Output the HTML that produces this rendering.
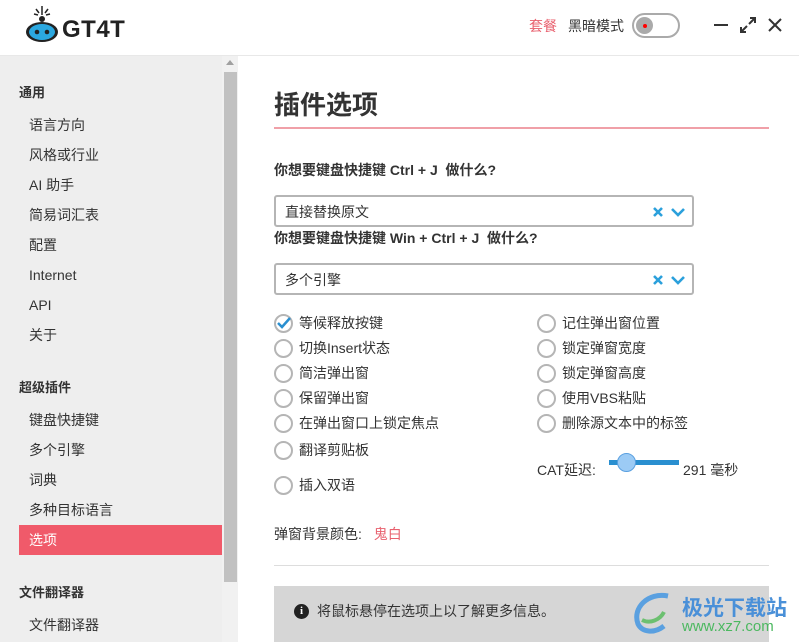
<!DOCTYPE html>
<html><head><meta charset="utf-8"><style>
*{margin:0;padding:0;box-sizing:border-box}
body{width:799px;height:642px;overflow:hidden;background:#fff;font-family:"Liberation Sans","Noto Sans CJK SC",sans-serif;color:#333;position:relative;font-size:14px}
.a{position:absolute;white-space:nowrap}
.side{position:absolute;left:0;top:56px;width:222px;height:586px;background:#eee}
.sb{position:absolute;left:222px;top:56px;width:16px;height:586px;background:#f1f1f1}
.thumb{position:absolute;left:224px;top:72px;width:13px;height:510px;background:#c1c1c1}
.h{font-weight:bold;color:#333;font-size:13px;line-height:18px}
.it{font-size:14px;color:#333;line-height:18px}
.sel{position:absolute;left:274px;width:420px;height:32px;border:2px solid #b5b5b5;border-radius:3px}
.sel span{position:absolute;left:9px;top:6px;font-size:14px;line-height:18px}
.rad{position:absolute;width:19px;height:19px;border:2px solid #b5b5b5;border-radius:50%;background:#fff}
.lbl{position:absolute;font-size:14px;color:#333;white-space:nowrap;line-height:18px}
</style></head><body>
<div class="a" style="left:0;top:55px;width:799px;height:1px;background:#e8e8e8"></div>
<svg class="a" style="left:24px;top:3px" width="36" height="40" viewBox="0 0 36 40">
<g stroke="#222" stroke-width="1.5"><line x1="18" y1="3" x2="18" y2="12"/><line x1="12" y1="6" x2="15" y2="10"/><line x1="24" y1="6" x2="21" y2="10"/><line x1="10" y1="11" x2="14" y2="12"/><line x1="26" y1="11" x2="22" y2="12"/></g>
<circle cx="18" cy="16" r="3" fill="#222"/>
<ellipse cx="18" cy="29" rx="16" ry="10" fill="#222"/><ellipse cx="18" cy="29" rx="13" ry="8" fill="#2ba8e0"/>
<circle cx="13" cy="29" r="2.3" fill="#222"/><circle cx="23" cy="29" r="2.3" fill="#222"/></svg>
<div class="a" style="left:62px;top:16px;font-size:24px;font-weight:bold;color:#222;letter-spacing:0.5px">GT4T</div>
<div class="a" style="left:529px;top:16px;font-size:14px;color:#e8606e">套餐</div>
<div class="a" style="left:568px;top:16px;font-size:14px;color:#333">黑暗模式</div>
<div class="a" style="left:632px;top:13px;width:48px;height:25px;border:2px solid #aaa;border-radius:13px"></div>
<div class="a" style="left:636px;top:17px;width:17px;height:17px;border-radius:50%;background:#aaa"></div>
<div class="a" style="left:643px;top:24px;width:4px;height:4px;border-radius:50%;background:red"></div>
<div class="a" style="left:714px;top:24px;width:14px;height:2px;background:#333"></div>
<svg class="a" style="left:739px;top:16px" width="18" height="18" viewBox="0 0 18 18" stroke="#333" stroke-width="2" fill="none"><path d="M10 8L16 2M11 2h5v5M8 10L2 16M2 11v5h5"/></svg>
<svg class="a" style="left:768px;top:18px" width="14" height="14" viewBox="0 0 14 14" stroke="#333" stroke-width="2"><path d="M1 1L13 13M13 1L1 13"/></svg>

<div class="side"></div><div class="sb"></div><div class="thumb"></div>
<div class="a" style="left:226px;top:60px;width:0;height:0;border-left:4px solid transparent;border-right:4px solid transparent;border-bottom:5px solid #a0a0a0"></div>
<div class="a" style="left:19px;top:525px;width:203px;height:30px;background:#f05a6a"></div>
<div class="a h" style="left:19px;top:84px">通用</div>
<div class="a it" style="left:29px;top:116px">语言方向</div>
<div class="a it" style="left:29px;top:146px">风格或行业</div>
<div class="a it" style="left:29px;top:176px">AI 助手</div>
<div class="a it" style="left:29px;top:206px">简易词汇表</div>
<div class="a it" style="left:29px;top:236px">配置</div>
<div class="a it" style="left:29px;top:266px">Internet</div>
<div class="a it" style="left:29px;top:296px">API</div>
<div class="a it" style="left:29px;top:326px">关于</div>
<div class="a h" style="left:19px;top:379px">超级插件</div>
<div class="a it" style="left:29px;top:411px">键盘快捷键</div>
<div class="a it" style="left:29px;top:441px">多个引擎</div>
<div class="a it" style="left:29px;top:471px">词典</div>
<div class="a it" style="left:29px;top:501px">多种目标语言</div>
<div class="a it" style="left:29px;top:531px;color:#fff">选项</div>
<div class="a h" style="left:19px;top:584px">文件翻译器</div>
<div class="a it" style="left:29px;top:616px">文件翻译器</div>

<div class="a" style="left:274px;top:85px;font-size:26px;font-weight:bold;color:#333">插件选项</div>
<div class="a" style="left:274px;top:127px;width:495px;height:2px;background:#f0a0a8"></div>
<div class="a lbl" style="left:274px;top:161px;font-weight:bold">你想要键盘快捷键 Ctrl + J&nbsp; 做什么?</div>
<div class="sel" style="top:195px"><span>直接替换原文</span></div>
<div class="a lbl" style="left:274px;top:229px;font-weight:bold">你想要键盘快捷键 Win + Ctrl + J&nbsp; 做什么?</div>
<div class="sel" style="top:263px"><span>多个引擎</span></div>
<svg class="a" style="left:652px;top:205px" width="38" height="14" viewBox="0 0 38 14" stroke="#2ba0dc" stroke-width="2.6" fill="none"><path d="M2 3l8 8M10 3l-8 8M20 4l6 6 6-6"/></svg>
<svg class="a" style="left:652px;top:273px" width="38" height="14" viewBox="0 0 38 14" stroke="#2ba0dc" stroke-width="2.6" fill="none"><path d="M2 3l8 8M10 3l-8 8M20 4l6 6 6-6"/></svg>

<div class="rad" style="left:274px;top:314px"></div>
<svg class="a" style="left:276px;top:316px" width="16" height="14" viewBox="0 0 16 14" stroke="#2a8fd0" stroke-width="2.5" fill="none"><path d="M2 7l4 4 8-9"/></svg>
<div class="lbl" style="left:299px;top:314px">等候释放按键</div>
<div class="rad" style="left:274px;top:339px"></div><div class="lbl" style="left:299px;top:339px">切换Insert状态</div>
<div class="rad" style="left:274px;top:364px"></div><div class="lbl" style="left:299px;top:364px">简洁弹出窗</div>
<div class="rad" style="left:274px;top:389px"></div><div class="lbl" style="left:299px;top:389px">保留弹出窗</div>
<div class="rad" style="left:274px;top:414px"></div><div class="lbl" style="left:299px;top:414px">在弹出窗口上锁定焦点</div>
<div class="rad" style="left:274px;top:441px"></div><div class="lbl" style="left:299px;top:441px">翻译剪贴板</div>
<div class="rad" style="left:274px;top:476px"></div><div class="lbl" style="left:299px;top:476px">插入双语</div>
<div class="rad" style="left:537px;top:314px"></div><div class="lbl" style="left:562px;top:314px">记住弹出窗位置</div>
<div class="rad" style="left:537px;top:339px"></div><div class="lbl" style="left:562px;top:339px">锁定弹窗宽度</div>
<div class="rad" style="left:537px;top:364px"></div><div class="lbl" style="left:562px;top:364px">锁定弹窗高度</div>
<div class="rad" style="left:537px;top:389px"></div><div class="lbl" style="left:562px;top:389px">使用VBS粘贴</div>
<div class="rad" style="left:537px;top:414px"></div><div class="lbl" style="left:562px;top:414px">删除源文本中的标签</div>
<div class="lbl" style="left:537px;top:461px">CAT延迟:</div>
<div class="a" style="left:609px;top:460px;width:70px;height:5px;background:#2a8fd0"></div>
<div class="a" style="left:617px;top:453px;width:19px;height:19px;border-radius:50%;background:#9ccbf5;border:1px solid #5aa0e0"></div>
<div class="lbl" style="left:683px;top:461px">291 毫秒</div>
<div class="lbl" style="left:274px;top:525px">弹窗背景颜色: <span style="color:#e8606e;margin-left:8px">鬼白</span></div>
<div class="a" style="left:274px;top:565px;width:495px;height:1px;background:#ddd"></div>
<div class="a" style="left:274px;top:586px;width:495px;height:56px;background:#d6d6d6"></div>
<div class="a" style="left:294px;top:604px;width:15px;height:15px;border-radius:50%;background:#222;color:#fff;font-size:11px;font-weight:bold;text-align:center;line-height:15px;font-family:'Liberation Serif',serif">i</div>
<div class="lbl" style="left:317px;top:602px">将鼠标悬停在选项上以了解更多信息。</div>
<svg class="a" style="left:628px;top:590px" width="50" height="48" viewBox="0 0 50 48"><path d="M40 6C20 2 4 18 10 34c4 8 16 10 26 2" stroke="#5aa0e0" stroke-width="5" fill="none"/><path d="M14 30c8 4 18 0 22-8" stroke="#6cc070" stroke-width="4" fill="none"/></svg>
<div class="a" style="left:682px;top:592px;font-size:21px;font-weight:bold;color:#4a90d8">极光下载站</div>
<div class="a" style="left:682px;top:618px;font-size:15px;color:#4cb860">www.xz7.com</div>
</body></html>
